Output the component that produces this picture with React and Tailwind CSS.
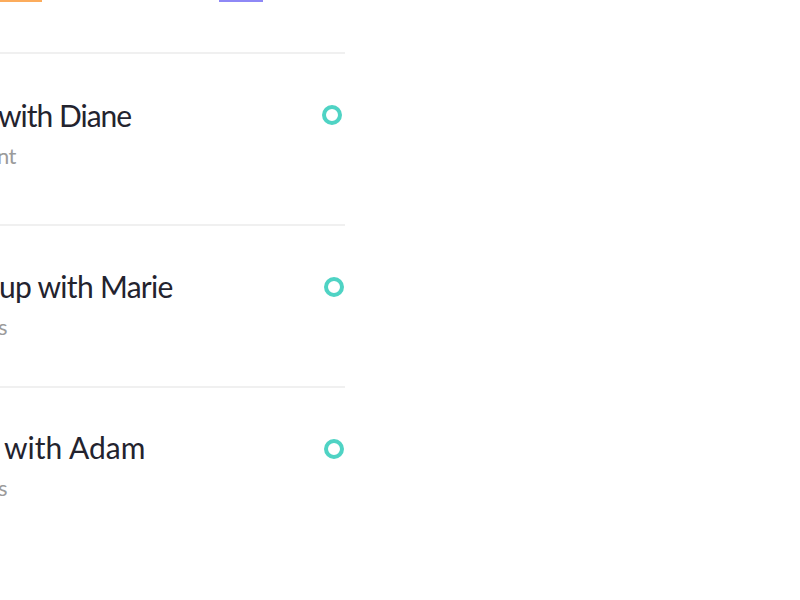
export default function App() {
  const rows = [
    { title: "with Diane", tx: "-ml-[2px] tracking-[-1px]", sub: "nt", sx: "-ml-[3px]", pb: "pb-[57px]", pt: "pt-[46px]", dot: "mr-[3px]" },
    { title: "up with Marie", tx: "-ml-[1px] tracking-[-0.7px]", sub: "s", sx: "-ml-[2px]", pb: "pb-[48px]", pt: "pt-[45px]", dot: "mr-[1px]" },
    { title: "with Adam", tx: "ml-[4px] tracking-[0px]", sub: "s", sx: "-ml-[2px]", pb: "pb-[48px]", pt: "pt-[44px]", dot: "mr-[1px]", last: true },
  ]

  return (
    <div className="w-[800px] h-[600px] bg-white overflow-hidden font-['Lato',sans-serif]">
      <div className="w-[345px]">
        {/* Tab indicators */}
        <div className="flex h-[54px] border-b-2 border-[#f0f0f0]">
          <div className="w-[42px] h-[2px] bg-[#fcac5c]"></div>
          <div className="ml-[177px] w-[44px] h-[2px] bg-[#8e88f6]"></div>
        </div>

        {rows.map((r) => (
          <div
            key={r.title}
            className={`flex items-start justify-between ${r.last ? "" : "border-b-2 border-[#f0f0f0]"} ${r.pb}`}
          >
            <div className={`flex flex-col ${r.pt}`}>
              <p className={`text-[30px] leading-none text-[#23232e] whitespace-nowrap ${r.tx}`}>{r.title}</p>
              <p className={`mt-[15px] text-[22px] leading-none tracking-[-0.5px] text-[#9b9b9b] whitespace-nowrap ${r.sx}`}>{r.sub}</p>
            </div>
            <span className={`mt-[51px] w-5 h-5 rounded-full border-4 border-[#4fd3c4] ${r.dot}`}></span>
          </div>
        ))}
      </div>
    </div>
  )
}
